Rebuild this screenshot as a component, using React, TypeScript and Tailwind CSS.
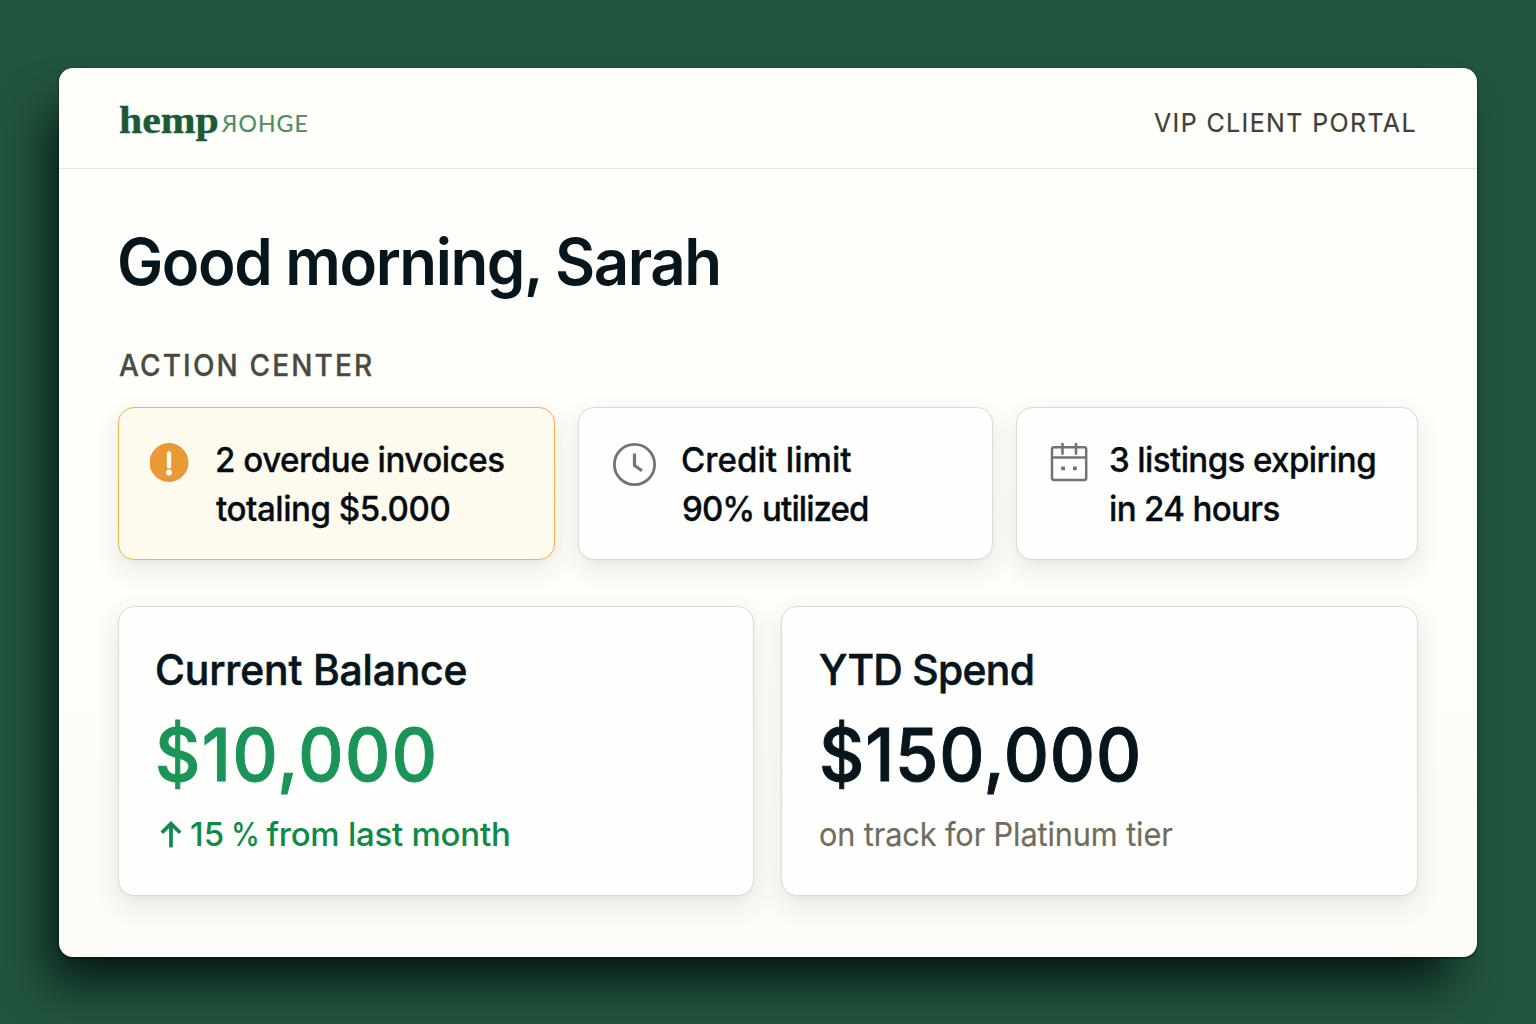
import type { ReactNode } from "react";

function AlertIcon() {
  return (
    <svg className="mt-[35px] h-[39px] w-[39px] shrink-0" viewBox="0 0 39 39" fill="none">
      <circle cx="19" cy="19.5" r="19" fill="#e99a35" stroke="#e08c24" strokeWidth="0.8" />
      <path d="M19 10.4v13" stroke="#fffdf6" strokeWidth="4.4" strokeLinecap="round" />
      <circle cx="19" cy="29.4" r="3" fill="#fffdf6" />
    </svg>
  );
}

function ClockIcon() {
  return (
    <svg className="mt-[35px] h-[43px] w-[43px] shrink-0" viewBox="0 0 43 43" fill="none" stroke="#6d7672">
      <circle cx="21.5" cy="21.5" r="20.1" strokeWidth="2.8" />
      <path d="M21.5 10.5v12l7.4 5.2" strokeWidth="3.2" />
    </svg>
  );
}

function CalendarIcon() {
  return (
    <svg className="mt-[34px] h-[40px] w-[38px] shrink-0" viewBox="0 0 38 40" fill="none" stroke="#6d7672" strokeWidth="2.5">
      <rect x="2" y="5.2" width="34.2" height="32.8" rx="2" />
      <path d="M2 15.6h34.2" />
      <path d="M12.5 2v9.6M26 2v9.6" strokeWidth="2.6" strokeLinecap="round" />
      <path d="M11.2 26.4h3.8M23 26.4h3.8" strokeWidth="3.6" />
    </svg>
  );
}

function ArrowUpIcon() {
  return (
    <svg className="h-[28px] w-[22px] shrink-0" viewBox="0 0 22 28" fill="none" stroke="#0f8a48" strokeWidth="3.7">
      <path d="M11 27.4V3.6" />
      <path d="M1.8 12.8 11 3.6l9.2 9.2" />
    </svg>
  );
}

const cardShadow = "shadow-[0_9px_24px_rgba(95,80,60,0.13),0_1px_3px_rgba(95,80,60,0.05)]";

function ActionCard({ icon, className, children }: { icon: ReactNode; className: string; children: ReactNode }) {
  return (
    <div className={`flex h-[153px] items-start rounded-[16px] border ${cardShadow} ${className}`}>
      {icon}
      <div className="pt-[27px] text-[34.5px] leading-[49px] font-medium whitespace-nowrap text-[#060d12] [-webkit-text-stroke:0.3px_#060d12]">
        {children}
      </div>
    </div>
  );
}

function Line({ className = "", children }: { className?: string; children: ReactNode }) {
  return <div className={`origin-left scale-x-96 ${className}`}>{children}</div>;
}

export default function App() {
  return (
    <div className="h-[1024px] w-[1536px] overflow-hidden bg-[#22553d] px-[59px] pt-[68px] font-['Inter','Liberation_Sans',sans-serif]">
      <div className="h-[889px] w-[1418px] rounded-[14px] bg-linear-to-b from-[#fefefa] from-45% to-[#fcfbf7] shadow-[-18px_34px_48px_-10px_rgba(2,14,14,0.88),0_1px_3px_rgba(0,20,10,0.8)]">
        <header className="flex h-[101px] items-baseline justify-between border-b border-[#e6e4df] px-[60px] pt-[32px]">
          <div className="flex items-baseline">
            <span className="relative top-px w-[103px] origin-left scale-x-110 font-['Liberation_Serif',serif] text-[38px] leading-none font-bold text-[#1a5a35] [-webkit-text-stroke:0.4px_#1a5a35]">
              hemp
            </span>
            <span className="font-['Lato',sans-serif] text-[23px] leading-none tracking-[1.1px] text-[#4f8c60] [-webkit-text-stroke:0.2px_#4f8c60]">ЯOHGE</span>
          </div>
          <div className="origin-right scale-x-96 text-[26px] leading-none tracking-[1.45px] text-[#3f4038] [-webkit-text-stroke:0.2px_#3f4038]">
            VIP CLIENT PORTAL
          </div>
        </header>

        <main className="px-[59px] pt-[61px]">
          <h1 className="-ml-px origin-left scale-x-[0.965] text-[64px] leading-none font-semibold tracking-[-1.5px] whitespace-nowrap text-[#07161d]">
            Good morning, Sarah
          </h1>
          <h2 className="mt-[55px] ml-[0.5px] origin-left scale-x-95 text-[29.5px] leading-[32px] font-medium tracking-[2.25px] text-[#494a42] [-webkit-text-stroke:0.3px_#494a42]">
            ACTION CENTER
          </h2>

          <section className="mt-[26px] grid grid-cols-[436.5px_415px_402.5px] justify-between">
            <ActionCard icon={<AlertIcon />} className="gap-[25.5px] border-[#f3b248] bg-[#fffaee] pl-[31px]">
              <Line className="tracking-[-0.5px]">2 overdue invoices</Line>
              <Line className="ml-px tracking-[-0.5px]">totaling $5.000</Line>
            </ActionCard>
            <ActionCard icon={<ClockIcon />} className="gap-[25px] border-[#dcdbd7] bg-[#fefefd] pl-[34px]">
              <Line>Credit limit</Line>
              <Line className="ml-px tracking-[-1px]">90% utilized</Line>
            </ActionCard>
            <ActionCard icon={<CalendarIcon />} className="gap-[21px] border-[#dcdbd7] bg-[#fefefd] pl-[33px]">
              <Line className="tracking-[-0.65px]">3 listings expiring</Line>
              <Line className="tracking-[-0.7px]">in 24 hours</Line>
            </ActionCard>
          </section>

          <section className="mt-[46px] grid grid-cols-[635.5px_637px] justify-between whitespace-nowrap">
            <div className={`h-[290px] rounded-[16px] border border-[#dcdbd7] bg-[#fefefd] pt-[39px] pl-[36px] ${cardShadow}`}>
              <Line className="text-[42.5px] leading-[48px] font-medium tracking-[-0.15px] text-[#07161d] [-webkit-text-stroke:0.6px_#07161d]">
                Current Balance
              </Line>
              <Line className="mt-[24px] text-[73px] leading-[74px] font-medium tracking-[1.6px] text-[#1b9458] [-webkit-text-stroke:1px_#1b9458]">
                $10,000
              </Line>
              <div className="mt-[24px] flex items-center pl-[5px] text-[33px] leading-[36px] font-medium text-[#0f8a48]">
                <ArrowUpIcon />
                <span className="ml-[8px] w-[40.5px]">15</span>
                <span className="w-[36px] origin-left scale-x-[0.88]">%</span>
                <span className="tracking-[-0.25px]">from last month</span>
              </div>
            </div>
            <div className={`h-[290px] rounded-[16px] border border-[#dcdbd7] bg-[#fefefd] pt-[39px] pl-[36.5px] ${cardShadow}`}>
              <Line className="text-[42.5px] leading-[48px] font-medium tracking-[-0.7px] text-[#07161d] [-webkit-text-stroke:0.6px_#07161d]">
                YTD Spend
              </Line>
              <Line className="mt-[24px] text-[73px] leading-[74px] font-medium tracking-[0.9px] text-[#07161d] [-webkit-text-stroke:1px_#07161d]">
                $150,000
              </Line>
              <div className="mt-[24px] origin-left scale-x-93 text-[33px] leading-[36px] tracking-[-0.12px] text-[#716d5e] [-webkit-text-stroke:0.2px_#716d5e]">
                on track for Platinum tier
              </div>
            </div>
          </section>
        </main>
      </div>
    </div>
  );
}
